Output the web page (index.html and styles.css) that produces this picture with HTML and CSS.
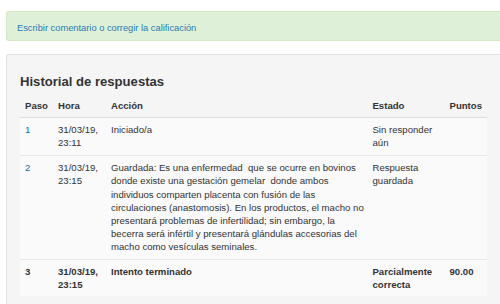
FILE: index.html
```html
<!DOCTYPE html>
<html lang="es">
<head>
  <title>Historial de respuestas</title>
  <link rel="stylesheet" href="styles.css">
</head>
<body>

<div class="comment-box">
  <a href="#">Escribir comentario o corregir la calificación</a>
</div>

<div class="history">
  <h3>Historial de respuestas</h3>
  <table class="history-table">
    <thead>
      <tr>
        <th class="c-step">Paso</th>
        <th class="c-time">Hora</th>
        <th class="c-action">Acción</th>
        <th class="c-state">Estado</th>
        <th class="c-marks">Puntos</th>
      </tr>
    </thead>
    <tbody>
      <tr>
        <td><a href="#">1</a></td>
        <td>31/03/19, 23:11</td>
        <td class="c-action">Iniciado/a</td>
        <td>Sin responder aún</td>
        <td></td>
      </tr>
      <tr>
        <td><a href="#">2</a></td>
        <td>31/03/19, 23:15</td>
        <td class="c-action">Guardada: Es una enfermedad&nbsp; que se ocurre en bovinos donde existe una gestación gemelar&nbsp; donde ambos individuos comparten placenta con fusión de las circulaciones (anastomosis). En los productos, el macho no presentará problemas de infertilidad; sin embargo, la becerra será infértil y presentará glándulas accesorias del macho como vesículas seminales.</td>
        <td>Respuesta guardada</td>
        <td></td>
      </tr>
      <tr class="current">
        <td>3</td>
        <td>31/03/19, 23:15</td>
        <td class="c-action">Intento terminado</td>
        <td>Parcialmente correcta</td>
        <td>90.00</td>
      </tr>
    </tbody>
  </table>
</div>

</body>
</html>
```

FILE: styles.css
```css
body {
  font-family: "Liberation Sans", Arial, sans-serif;
  font-size: 9.6px;
  line-height: 13.2px;
  color: #333;
  background: #fff;
  margin: 0;
  padding: 11px 0 0 6px;
}

a {
  color: #0f6fa5;
  text-decoration: none;
}

.comment-box {
  background-color: #dff0d8;
  border: 1px solid #d6e9c6;
  border-right: none;
  border-radius: 3px 0 0 3px;
  height: 30px;
  box-sizing: border-box;
  padding: 10px 10px 0;
  margin-bottom: 13px;
  font-size: 9.3px;
}

.comment-box a {
  color: #2a7ab0;
}

.history {
  background-color: #f5f5f5;
  border: 1px solid #e3e3e3;
  border-right: none;
  border-radius: 3px 0 0 3px;
  padding: 12px 12px 8px 13px;
  height: 260px;
  box-sizing: border-box;
}

.history h3 {
  margin: 7px 0 4px;
  font-size: 13.1px;
  line-height: 15px;
  font-weight: bold;
  color: #333;
}

.history-table {
  width: 467px;
  border-collapse: collapse;
  background-color: #fafafa;
}

.history-table th,
.history-table td {
  text-align: left;
  vertical-align: top;
  padding: 5.5px 5px 5px;
}

.history-table th {
  font-weight: bold;
  border-bottom: 1px solid #ddd;
}

.history-table td {
  border-top: 1px solid #e6e6e6;
}

.history-table thead tr {
  background-color: #f5f5f5;
}

.history-table .c-action {
  padding-right: 0;
}

.c-step { width: 23px; }
.c-time { width: 43px; }
th.c-action { width: 257px; }
.c-state { width: 67px; }

.history-table tr.current td {
  font-weight: bold;
}
```
